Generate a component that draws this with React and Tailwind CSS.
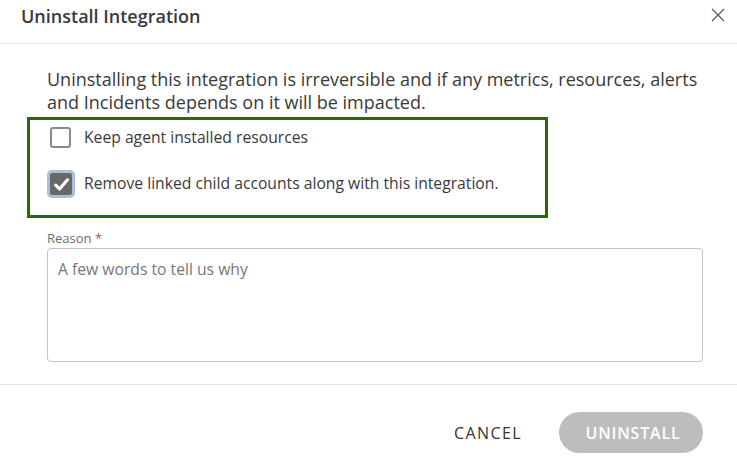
import React, { useState } from "react";

const CheckIcon = () => (
  <svg viewBox="0 0 16 16" className="w-[17px] h-[17px]" fill="none">
    <path d="M2.5 8.6 L6.2 12.2 L13.6 3.6" stroke="white" strokeWidth="3" strokeLinecap="round" strokeLinejoin="round" />
  </svg>
);

const App = () => {
  const [keep, setKeep] = useState(false);
  const [removeLinked, setRemoveLinked] = useState(true);

  return (
    <div
      className="w-[737px] h-[460px] bg-white overflow-hidden text-[#333]"
      style={{ fontFamily: '"Open Sans", "Noto Sans", sans-serif' }}
    >
      {/* header */}
      <div className="h-[44px] flex items-center justify-between pl-[21px] pr-[12px] border-b border-[#e2e2e2]">
        <h2 className="text-[18px] font-semibold text-[#3a3a3a] -mt-[13px] leading-none pt-[1px]">Uninstall Integration</h2>
        <button className="w-[14px] h-[14px] -mt-[14px]">
          <svg viewBox="0 0 14 14" className="w-[14px] h-[14px]">
            <path d="M1 1 L13 13 M13 1 L1 13" stroke="#555" strokeWidth="1.2" />
          </svg>
        </button>
      </div>

      {/* body */}
      <div className="px-[47px] pt-[24px]">
        <p className="text-[18px] leading-[23px] text-[#3a3a3a] -mr-[30px]">
          Uninstalling this integration is irreversible and if any metrics, resources, alerts and Incidents depends on it will be impacted.
        </p>

        <div className="-ml-[20px] mt-[3px] w-[521px] h-[101px] border-[3px] border-[#2c6610] pl-[20px] pt-[7px] flex flex-col">
          <label className="flex items-center gap-[13px] h-[21px] cursor-pointer" onClick={() => setKeep(!keep)}>
            <span className={`w-[21px] h-[21px] rounded-[3px] border-2 flex items-center justify-center ${keep ? "bg-[#666] border-[#666]" : "border-[#8a8a8a] bg-white"}`}>
              {keep && <CheckIcon />}
            </span>
            <span className="text-[15.7px] text-[#3a3a3a]">Keep agent installed resources</span>
          </label>

          <label className="flex items-center gap-[9px] h-[28px] mt-[22px] -ml-[3px] cursor-pointer" onClick={() => setRemoveLinked(!removeLinked)}>
            <span className="w-[28px] h-[28px] rounded-[5px] bg-[#a9bfdc] flex items-center justify-center">
              <span className={`w-[22px] h-[22px] rounded-[2px] flex items-center justify-center ${removeLinked ? "bg-[#686868]" : "bg-white border-2 border-[#8a8a8a]"}`}>
                {removeLinked && <CheckIcon />}
              </span>
            </span>
            <span className="text-[15.7px] text-[#3a3a3a]">Remove linked child accounts along with this integration.</span>
          </label>
        </div>

        <div className="mt-[11px] text-[13px] leading-[18px] text-[#6b6b6b]">
          Reason <span className="text-[#e53935]">*</span>
        </div>
        <textarea
          placeholder="A few words to tell us why"
          className="mt-[1px] block w-[656px] h-[114px] border border-[#c4c4c4] rounded-[4px] px-[10px] py-[9px] text-[15.7px] leading-[22px] resize-none outline-none placeholder:text-[#777]"
        />
      </div>

      {/* footer */}
      <div className="mt-[22px] border-t border-[#e2e2e2] h-[80px] flex items-start justify-end pr-[34px] pt-[27px] gap-[37px]">
        <button className="h-[41px] text-[16px] tracking-[1.4px] text-[#333]">CANCEL</button>
        <button className="w-[144px] h-[41px] rounded-full bg-[#bdbdbd] text-white text-[16px] font-semibold tracking-[0.8px] pl-[4px]">UNINSTALL</button>
      </div>
    </div>
  );
};

export default App;
